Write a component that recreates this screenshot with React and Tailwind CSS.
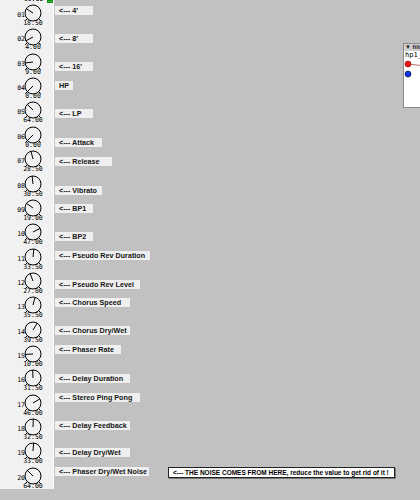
import React from "react";

const knobs = [
  { n: "01", v: 18.5 },
  { n: "02", v: 4 },
  { n: "03", v: 9 },
  { n: "04", v: 0 },
  { n: "05", v: 64 },
  { n: "06", v: 0 },
  { n: "07", v: 28.5 },
  { n: "08", v: 30.5 },
  { n: "09", v: 19 },
  { n: "10", v: 47 },
  { n: "11", v: 33.5 },
  { n: "12", v: 27 },
  { n: "13", v: 35.5 },
  { n: "14", v: 39.5 },
  { n: "15", v: 10 },
  { n: "16", v: 31.5 },
  { n: "17", v: 46 },
  { n: "18", v: 32.5 },
  { n: "19", v: 33 },
  { n: "20", v: 64 },
];

// comments on the patch canvas: text, centre y, width
const labels = [
  ["<--- 4'", 10, 38],
  ["<--- 8'", 38, 38],
  ["<--- 16'", 66, 38],
  ["HP", 85, 18],
  ["<--- LP", 113, 38],
  ["<--- Attack", 142, 47],
  ["<--- Release", 161, 57],
  ["<--- Vibrato", 190, 47],
  ["<--- BP1", 208, 38],
  ["<--- BP2", 236, 38],
  ["<--- Pseudo Rev Duration", 255, 95],
  ["<--- Pseudo Rev Level", 284, 85],
  ["<--- Chorus Speed", 302, 75],
  ["<--- Chorus Dry/Wet", 330, 75],
  ["<--- Phaser Rate", 349, 66],
  ["<--- Delay Duration", 378, 75],
  ["<--- Stereo Ping Pong", 397, 85],
  ["<--- Delay Feedback", 425, 75],
  ["<--- Delay Dry/Wet", 452, 75],
  ["<--- Phaser Dry/Wet Noise", 471, 94],
];

function angleFor(v) {
  if (v >= 64) return -45;
  return (v / 64) * 270 - 135;
}

function Knob({ n, v }) {
  const a = (angleFor(v) * Math.PI) / 180;
  const cx = 12;
  const cy = 9;
  const x2 = cx + 8 * Math.sin(a);
  const y2 = cy - 8 * Math.cos(a);
  return (
    <div className="flex h-[24.37px] pl-[14px]">
      <span className="w-[11px] mt-[7px] text-right text-[6.5px] leading-[8px] text-black">{n}</span>
      <div className="flex flex-col items-center w-[24px] ml-[-4px]">
        <svg className="block overflow-visible" width="24" height="15" viewBox="0 0 24 15">
          <circle cx={cx} cy={cy} r="8" fill="none" stroke="#000" strokeWidth="1" />
          <line x1={cx} y1={cy} x2={x2} y2={y2} stroke="#000" strokeWidth="1" />
          <line x1="6.3" y1="14.7" x2="4.2" y2="16.8" stroke="#000" strokeWidth="1" />
          <line x1="17.7" y1="14.7" x2="19.8" y2="16.8" stroke="#000" strokeWidth="1" />
        </svg>
        <span className="text-[6.5px] leading-[8px] text-black whitespace-nowrap">{v.toFixed(2)}</span>
      </div>
    </div>
  );
}

export default function App() {
  return (
    <div
      className="relative w-[420px] h-[500px] overflow-hidden bg-[#c1c1c1]"
      style={{ fontFamily: '"Liberation Sans", Arial, sans-serif' }}
    >
      {/* knob column */}
      <div
        className="relative w-[54px] h-[489px] bg-[#f1f1f1] border-r border-white pt-[4px]"
        style={{ fontFamily: '"DejaVu Sans Mono", monospace' }}
      >
        <span className="absolute left-[19px] top-[-5px] w-[29px] text-center text-[6.5px] leading-[8px] text-black">
          11.00
        </span>
        <div className="absolute left-[47px] top-0 w-[6px] h-[3px] bg-[#2ec52e] border border-[#1b8a1b]" />
        {knobs.map((k) => (
          <Knob key={k.n} n={k.n} v={k.v} />
        ))}
      </div>

      {/* comments on the canvas */}
      {labels.map(([t, y, w]) => (
        <div
          key={t}
          className="absolute left-[55px] h-[9px] bg-[#efefef] pl-[4px] text-[7.2px] leading-[9px] font-bold text-[#151515] whitespace-nowrap overflow-hidden"
          style={{ top: y - 4.5, width: w }}
        >
          {t}
        </div>
      ))}

      <div className="absolute left-[168px] top-[467px] w-[227px] h-[11px] bg-white border border-[#222] shadow-[1px_1px_0_#777] pl-[4px] text-[6.5px] leading-[9px] font-bold text-black whitespace-nowrap overflow-hidden">
        {"<--- THE NOISE COMES FROM HERE, reduce the value to get rid of it !"}
      </div>

      {/* subpatch window peeking in at the right */}
      <div className="absolute left-[403px] top-[43px] w-[30px] h-[65px] bg-white border border-[#8a8a8a]">
        <div className="h-[7px] bg-[#cfcfcf] text-[6px] leading-[7px] font-bold text-[#222] pl-[1px] whitespace-nowrap">
          ▼ filt
        </div>
        <div
          className="text-[7px] leading-[9px] text-black pl-[1px] whitespace-nowrap"
          style={{ fontFamily: '"DejaVu Sans Mono", monospace' }}
        >
          hp1_
        </div>
        <svg className="block" width="30" height="20" viewBox="0 0 30 20">
          <line x1="4" y1="4" x2="30" y2="7" stroke="#c07070" strokeWidth="1" />
          <circle cx="4" cy="4" r="3" fill="#ee1111" stroke="#700" strokeWidth="0.6" />
          <circle cx="4" cy="14" r="3" fill="#1133ee" stroke="#003" strokeWidth="0.6" />
        </svg>
      </div>
    </div>
  );
}
